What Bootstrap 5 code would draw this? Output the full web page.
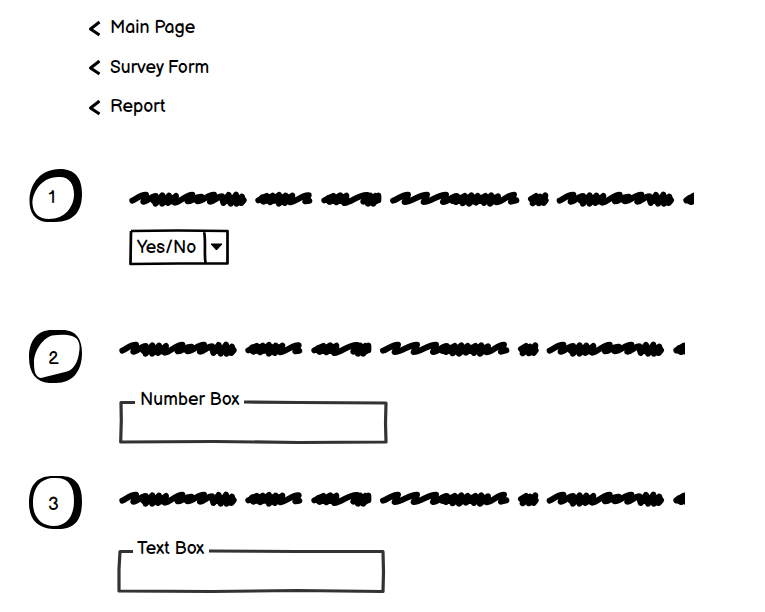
<!DOCTYPE html>
<html lang="en">
<head>
<meta charset="utf-8">
<title>Survey Form</title>
<meta name="viewport" content="width=device-width, initial-scale=1">
<link href="https://cdn.jsdelivr.net/npm/bootstrap@5.3.0/dist/css/bootstrap.min.css" rel="stylesheet">
<style>
body{font-family:"Balsamiq Sans",Inter,"Open Sans",sans-serif;font-size:17.7px;line-height:20px;color:#000;background:#fff;height:612px;overflow:hidden}
svg{display:block;overflow:visible}
.menu{padding:8px 0 0 88px;height:169px}
.menu a{color:#000;height:39.5px;gap:9px;white-space:nowrap}
.menu a:nth-child(2) span{padding-top:1px;letter-spacing:.08px}
.question{padding-left:29px}
.q1{height:161px}.q2{height:146px}.q3{height:130px}
.bubble{width:53px;height:53px;flex:none}
.bubble svg,.frame svg{position:absolute;left:0;top:0}
.num{position:relative;padding:5px 0 0 1px}
.q1 .num{padding:4px 5px 0 0;left:-1px}
.q2 .num,.q3 .num{padding-right:5px}
.body1{margin-left:38px;padding-top:16px}
.body2{margin-left:28px;padding-top:5px}
.body3{margin-left:28px;padding-top:9px}
.scribble{width:575px;height:30px;overflow:hidden}
.body1 .scribble{width:574px}
#words{fill:none;stroke:#000;stroke-width:18;stroke-linecap:round;stroke-linejoin:round}
#words .core{stroke-width:28}
.picker{width:100px;height:36px;margin:14px 0 0 9px;padding:1px 0 0 8px;border:0;background:none;text-align:left}
.frame{position:relative;display:block}
.frame span{position:relative;white-space:nowrap;display:inline-block}
.f2{width:269px;height:44px;margin:35px 0 0 9px}
.f3{width:269px;height:44px;margin:34px 0 0 7px}
.f2 span{left:21px;top:-10px}
.f3 span{left:20px;top:-10px}
</style>
</head>
<body>
<svg width="0" height="0" class="position-absolute" aria-hidden="true"><defs>
<g id="words">
<path id="long" d="M37 47C48 44 60 28 78 29L70 50C84 50 92 33 107 33L107 56L127 31L127 56L147 32L144 54L168 33L164 53C182 52 196 29 217 29L203 49C218 49 226 33 244 35L232 49C252 49 264 27 282 29L270 50C284 49 292 34 306 34L310 54L326 30L332 56L348 29L350 56L366 35L364 54L371 46"/>
<path d="M415 46L440 33L430 50L458 32L451 52L477 30L477 56L497 32L494 54L517 32L511 52C530 50 548 28 566 31L556 49L568 47"/>
<path d="M613 46L640 33L629 51L661 31L649 52L679 32L673 54C694 52 716 28 742 30L730 50L751 32L744 56L766 33L760 56L775 32L775 46"/>
<path d="M819 47C832 44 846 28 864 29L854 51C876 51 898 28 921 29L911 51C933 51 955 28 978 29L969 51C985 50 995 34 1010 33L1008 51L1034 33L1028 55L1054 31L1047 56L1073 33L1068 53L1096 33L1092 54L1114 31L1110 56L1134 34L1130 52C1150 50 1164 28 1182 29L1173 50L1189 46"/>
<path d="M1233 42L1248 33L1238 55L1260 35L1257 55L1276 31L1271 54L1277 46"/>
<use href="#long" x="1282"/>
<path d="M1699 46L1722 32L1713 51L1738 32L1732 54"/>
<path class="core" d="M104 44H160M312 43L364 44M429 42H510M628 43H675M738 44H766M999 43H1130M1244 44H1267M1386 44H1442M1594 43L1646 44M1710 44H1740"/>
</g>
<path id="back" d="M11.500 2L2.500 9L11.500 15" fill="none" stroke="#000" stroke-width="3" stroke-linecap="butt" stroke-linejoin="round"/>
</defs></svg>

<nav class="menu d-flex flex-column">
<a href="#" class="d-flex align-items-center text-decoration-none"><svg width="13" height="16"><use href="#back"/></svg><span>Main Page</span></a>
<a href="#" class="d-flex align-items-center text-decoration-none"><svg width="13" height="16"><use href="#back"/></svg><span>Survey Form</span></a>
<a href="#" class="d-flex align-items-center text-decoration-none"><svg width="13" height="16"><use href="#back"/></svg><span>Report</span></a>
</nav>

<section class="question q1 d-flex">
<div class="bubble position-relative d-flex align-items-center justify-content-center">
<svg width="53" height="53"><path fill-rule="evenodd" d="M.5 31C1 14 12 0 31 0C46 0 53 9 53 25C53 42 45 53 26 53H17C6 52 0 43 .5 31ZM3.5 35C3 23 13 8 29 8C40 7 45 15 45 25C45 38 36 50 20 50C10 50 4 44 3.5 35Z"/></svg>
<span class="num">1</span></div>
<div class="body1">
<svg class="scribble" viewBox="0 0 1722 90"><use href="#words"/></svg>
<button class="picker frame"><svg width="100" height="36"><path d="M2 2L48 1.5L98.5 2L98.5 34.500L50 34.500L1.5 35L2 2M75 2C77 11 75 25 76.500 34" fill="none" stroke="#000" stroke-width="2.7" stroke-linejoin="round"/><path d="M82 15H93L87.500 21Z" stroke="#000" stroke-linejoin="round"/></svg><span>Yes/No</span></button>
</div></section>

<section class="question q2 d-flex">
<div class="bubble position-relative d-flex align-items-center justify-content-center">
<svg width="53" height="53"><path fill-rule="evenodd" d="M0 27C0 10 9 0 23 0H33C48 0 53 10 53 23C53 42 43 53 27 53H20C7 52 0 43 0 27ZM5 32C5 23 12 9 23 5.500C31 4.500 38 4.500 43 6C49 8 52 13 50 23C49 32 44 41 36 42L12 48C6 47 5 41 5 32Z"/></svg>
<span class="num">2</span></div>
<div class="body2">
<svg class="scribble" viewBox="0 0 1725 90"><use href="#words"/></svg>
<div class="frame f2"><svg width="269" height="44"><path d="M16 2.500H2L2.300 20L1.700 42L95 41.500L180 42.500L267 42L266.500 23L267 3L180 2.500L125 2" fill="none" stroke="#333" stroke-width="3.200" stroke-linejoin="round"/></svg><span>Number Box</span></div>
</div></section>

<section class="question q3 d-flex">
<div class="bubble position-relative d-flex align-items-center justify-content-center">
<svg width="53" height="53"><path fill-rule="evenodd" d="M0 27C0 8 9 0 24 0H31C46 0 53 8 53 25C53 43 47 53 29 53H24C9 52 0 44 0 27ZM4 27C4 9 14 2 25 2C39 1 45 9 45 25C45 41 37 50 25 50C13 50 4 42 4 27Z"/></svg>
<span class="num">3</span></div>
<div class="body3">
<svg class="scribble" viewBox="0 0 1725 90"><use href="#words"/></svg>
<div class="frame f3"><svg width="269" height="44"><path d="M16 2.500H3L2 20L2 42L95 42.500L180 41.500L266 42.500L266.500 23L266 2.500L180 2.500L92 2" fill="none" stroke="#333" stroke-width="3.200" stroke-linejoin="round"/></svg><span>Text Box</span></div>
</div></section>
<script src="https://cdn.jsdelivr.net/npm/bootstrap@5.3.0/dist/js/bootstrap.bundle.min.js"></script>
</body>
</html>
